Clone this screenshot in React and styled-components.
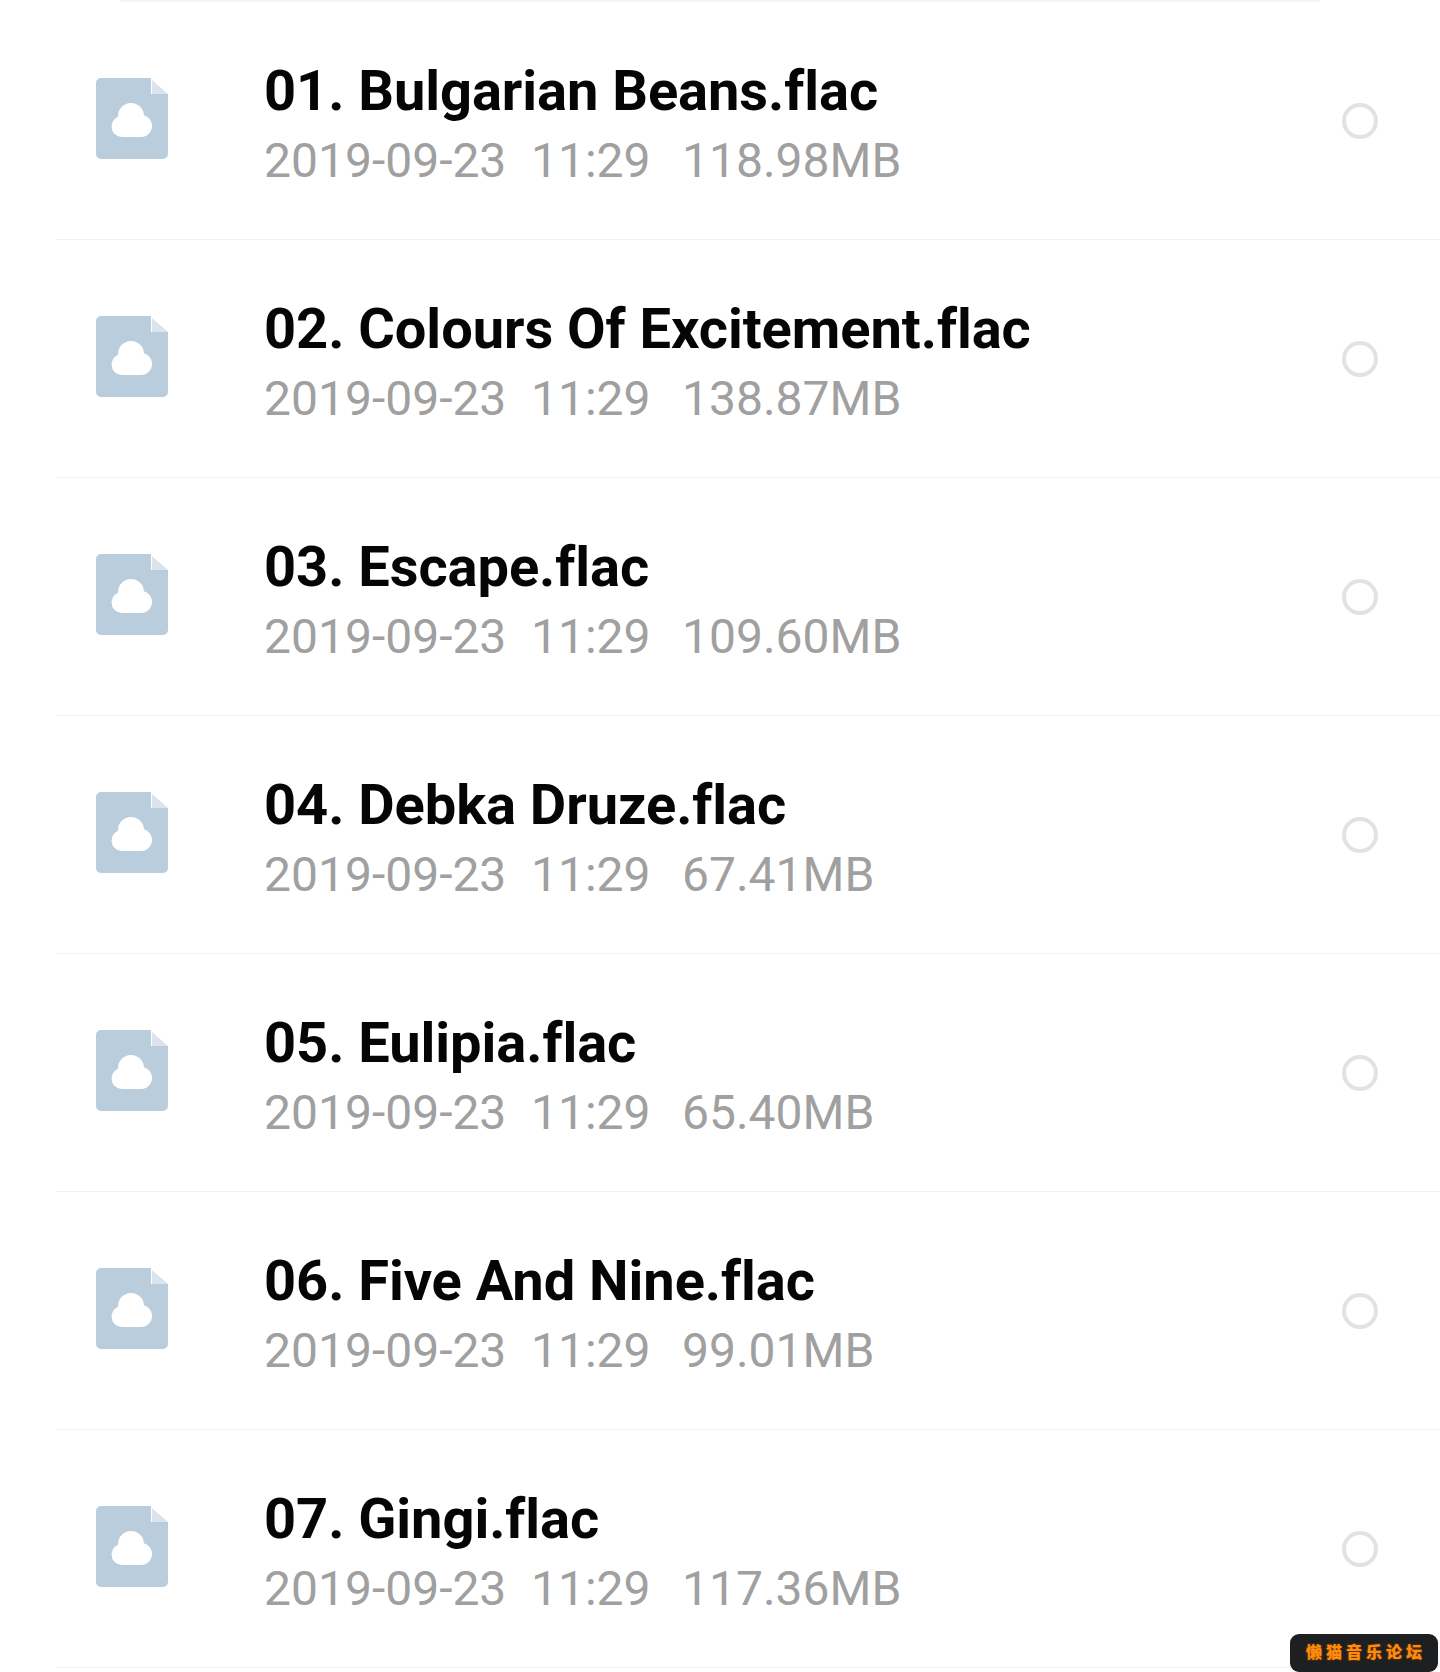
import styled, { createGlobalStyle } from 'styled-components'

const FILES = [
  { name: '01. Bulgarian Beans.flac', size: '118.98MB' },
  { name: '02. Colours Of Excitement.flac', size: '138.87MB' },
  { name: '03. Escape.flac', size: '109.60MB' },
  { name: '04. Debka Druze.flac', size: '67.41MB' },
  { name: '05. Eulipia.flac', size: '65.40MB' },
  { name: '06. Five And Nine.flac', size: '99.01MB' },
  { name: '07. Gingi.flac', size: '117.36MB' },
]

const Global = createGlobalStyle`
  html, body {
    margin: 0;
    background: #fff;
    height: 1672px;
    overflow: hidden;
  }
`

const Page = styled.div`
  position: relative;
  width: 1440px;
  height: 1672px;
  overflow: hidden;
  background: #fff;
  font-family: Roboto, "Liberation Sans", sans-serif;
`

const TopRule = styled.div`
  height: 2px;
  margin: 0 120px;
  background: linear-gradient(#eeeeee, #f9f9f9);
`

const List = styled.div`
  display: flex;
  flex-direction: column;
`

const Row = styled.div`
  height: 238px;
  box-sizing: border-box;
  margin-left: 56px;
  padding: 0 62px 0 40px;
  display: flex;
  align-items: center;
  border-bottom: 1px solid #f2f2f2;
`

const IconWrap = styled.div`
  width: 72px;
  height: 81px;
  flex: none;
  margin-right: 96px;
  margin-bottom: 4px;
  display: flex;
`

const Info = styled.div`
  flex: 1;
  display: flex;
  flex-direction: column;
  min-width: 0;
  padding-top: 6px;
`

const Name = styled.div`
  font-size: 56px;
  font-weight: 700;
  line-height: 64px;
  color: #050505;
  letter-spacing: -0.05px;
`

const Meta = styled.div`
  display: flex;
  font-size: 48px;
  line-height: 56px;
  margin-top: 10px;
  color: #a0a0a0;
`

const MetaDate = styled.span`
  width: 267px;
`

const MetaTime = styled.span`
  width: 151px;
`

const Radio = styled.div`
  width: 36px;
  height: 36px;
  flex: none;
  box-sizing: border-box;
  border: 4px solid #e2e2e2;
  border-radius: 50%;
`

const Watermark = styled.div`
  position: absolute;
  right: 2px;
  bottom: 0;
  width: 148px;
  height: 38px;
  background: #1d1f20;
  border-radius: 9px;
  display: flex;
  align-items: center;
  justify-content: center;
  padding: 0 0 5px 4px;
  box-sizing: border-box;
  font-family: "Noto Sans CJK SC", sans-serif;
  font-size: 16px;
  font-weight: 900;
  letter-spacing: 4px;
  color: #ff8a0c;
  text-shadow: 0 0 2px #a85400;
`

function FileIcon() {
  return (
    <svg width="72" height="81" viewBox="0 0 72 81">
      <path
        d="M5 0H55V16H72V76a5 5 0 0 1-5 5H5a5 5 0 0 1-5-5V5a5 5 0 0 1 5-5Z"
        fill="#bacddc"
      />
      <path d="M56 2L72 16H56Z" fill="#dbe3ec" />
      <g fill="#fff">
        <circle cx="26" cy="48.500" r="10.500" />
        <circle cx="35" cy="38" r="13" />
        <circle cx="45" cy="48" r="11" />
        <rect x="26" y="45" width="19" height="14" />
      </g>
    </svg>
  )
}

export default function App() {
  return (
    <Page>
      <Global />
      <TopRule />
      <List>
        {FILES.map((f) => (
          <Row key={f.name}>
            <IconWrap>
              <FileIcon />
            </IconWrap>
            <Info>
              <Name>{f.name}</Name>
              <Meta>
                <MetaDate>2019-09-23</MetaDate>
                <MetaTime>11:29</MetaTime>
                <span>{f.size}</span>
              </Meta>
            </Info>
            <Radio />
          </Row>
        ))}
      </List>
      <Watermark>懒猫音乐论坛</Watermark>
    </Page>
  )
}
